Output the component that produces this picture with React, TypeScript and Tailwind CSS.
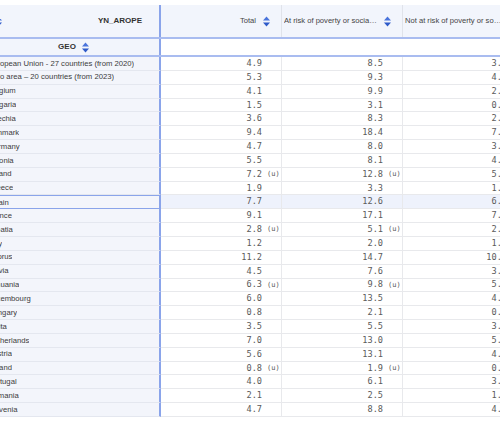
import React from 'react'

type Row = {
  geo: string
  total: string
  totalFlag?: string
  risk: string
  riskFlag?: string
  notRisk: string
  selected?: boolean
}

const rows: Row[] = [
  { geo: 'European Union - 27 countries (from 2020)', total: '4.9', risk: '8.5', notRisk: '3.8' },
  { geo: 'Euro area – 20 countries (from 2023)', total: '5.3', risk: '9.3', notRisk: '4.3' },
  { geo: 'Belgium', total: '4.1', risk: '9.9', notRisk: '2.9' },
  { geo: 'Bulgaria', total: '1.5', risk: '3.1', notRisk: '0.9' },
  { geo: 'Czechia', total: '3.6', risk: '8.3', notRisk: '2.9' },
  { geo: 'Denmark', total: '9.4', risk: '18.4', notRisk: '7.9' },
  { geo: 'Germany', total: '4.7', risk: '8.0', notRisk: '3.8' },
  { geo: 'Estonia', total: '5.5', risk: '8.1', notRisk: '4.8' },
  { geo: 'Ireland', total: '7.2', totalFlag: '(u)', risk: '12.8', riskFlag: '(u)', notRisk: '5.9' },
  { geo: 'Greece', total: '1.9', risk: '3.3', notRisk: '1.3' },
  { geo: 'Spain', total: '7.7', risk: '12.6', notRisk: '6.0', selected: true },
  { geo: 'France', total: '9.1', risk: '17.1', notRisk: '7.5' },
  { geo: 'Croatia', total: '2.8', totalFlag: '(u)', risk: '5.1', riskFlag: '(u)', notRisk: '2.3' },
  { geo: 'Italy', total: '1.2', risk: '2.0', notRisk: '1.0' },
  { geo: 'Cyprus', total: '11.2', risk: '14.7', notRisk: '10.6' },
  { geo: 'Latvia', total: '4.5', risk: '7.6', notRisk: '3.4' },
  { geo: 'Lithuania', total: '6.3', totalFlag: '(u)', risk: '9.8', riskFlag: '(u)', notRisk: '5.1' },
  { geo: 'Luxembourg', total: '6.0', risk: '13.5', notRisk: '4.6' },
  { geo: 'Hungary', total: '0.8', risk: '2.1', notRisk: '0.6' },
  { geo: 'Malta', total: '3.5', risk: '5.5', notRisk: '3.2' },
  { geo: 'Netherlands', total: '7.0', risk: '13.0', notRisk: '5.9' },
  { geo: 'Austria', total: '5.6', risk: '13.1', notRisk: '4.2' },
  { geo: 'Poland', total: '0.8', totalFlag: '(u)', risk: '1.9', riskFlag: '(u)', notRisk: '0.6' },
  { geo: 'Portugal', total: '4.0', risk: '6.1', notRisk: '3.5' },
  { geo: 'Romania', total: '2.1', risk: '2.5', notRisk: '1.9' },
  { geo: 'Slovenia', total: '4.7', risk: '8.8', notRisk: '4.2' },
]

const SortIcon = () => (
  <svg width="7" height="11" viewBox="0 0 7 11" className="shrink-0">
    <polygon points="3.5,0.5 7,4.5 0,4.5" fill="#4a74dc" />
    <polygon points="0,6.5 7,6.5 3.5,10.5" fill="#2f5bc9" />
  </svg>
)

const NumCell = ({
  value,
  flag,
  selected,
  wide,
}: {
  value: string
  flag?: string
  selected?: boolean
  wide?: boolean
}) => (
  <div
    className={`${wide ? 'w-[124px]' : 'w-[121px]'} shrink-0 flex items-center justify-end border-r border-b border-[#e8e9ec] ${
      selected ? 'bg-[#eef2fc]' : 'bg-white'
    }`}
  >
    <span className="font-['DejaVu_Sans_Mono',monospace] text-[8.6px] text-[#5a5a5a]">{value}</span>
    <span className="w-[19px] pl-[5px] font-['DejaVu_Sans_Mono',monospace] text-[7px] text-[#5a5a5a]">
      {flag}
    </span>
  </div>
)

export default function App() {
  return (
    <div className="w-[500px] h-[424px] overflow-hidden bg-white font-['Liberation_Sans',Arial,sans-serif]">
      <div className="pt-[5px] ml-[-30px] w-[620px]">
        {/* Header row 1 */}
        <div className="flex h-[34px] bg-[#f2f5fc] border-b-2 border-[#a9bcf0]">
          <div className="w-[191px] shrink-0 flex items-center justify-between pl-[25px] pr-[17px] border-r-2 border-[#8aa4ea]">
            <SortIcon />
            <span className="text-[8px] font-bold text-[#333]">YN_AROPE</span>
          </div>
          <div className="w-[121px] shrink-0 flex items-center justify-end gap-[7px] pr-[11px] border-r border-[#e0e3ea]">
            <span className="text-[7.6px] text-[#444]">Total</span>
            <SortIcon />
          </div>
          <div className="w-[121px] shrink-0 flex items-center gap-[6px] pl-[2px] pr-[11px] border-r border-[#e0e3ea]">
            <span className="flex-1 min-w-0 truncate text-[7.6px] text-[#444]">
              At risk of poverty or social exclusion
            </span>
            <SortIcon />
          </div>
          <div className="w-[124px] shrink-0 flex items-center gap-[6px] pl-[2px] pr-[11px] border-r border-[#e0e3ea]">
            <span className="flex-1 min-w-0 truncate text-[7.6px] text-[#444]">
              Not at risk of poverty or social exclusion
            </span>
            <SortIcon />
          </div>
        </div>

        {/* Header row 2 */}
        <div className="flex h-[18px] border-b-2 border-[#a9bcf0]">
          <div className="w-[191px] shrink-0 flex items-center justify-center gap-[6px] pl-[18px] bg-[#f2f5fc] border-r-2 border-[#8aa4ea]">
            <span className="text-[8px] font-bold text-[#333]">GEO</span>
            <SortIcon />
          </div>
          <div className="flex-1 bg-white" />
        </div>

        {/* Data rows */}
        {rows.map((r) => (
          <div key={r.geo} className="flex h-[13.85px]">
            <div
              className={`w-[191px] shrink-0 flex items-center pl-[18px] bg-[#f3f5fb] border-r-2 border-r-[#8aa4ea] ${
                r.selected ? 'border-y border-l border-[#8aa4ea]' : 'border-b border-b-[#e4e7ef]'
              }`}
            >
              <span className="truncate text-[7.7px] text-[#3c3c3c]">{r.geo}</span>
            </div>
            <NumCell value={r.total} flag={r.totalFlag} selected={r.selected} />
            <NumCell value={r.risk} flag={r.riskFlag} selected={r.selected} />
            <NumCell value={r.notRisk} selected={r.selected} wide />
          </div>
        ))}
      </div>
    </div>
  )
}
